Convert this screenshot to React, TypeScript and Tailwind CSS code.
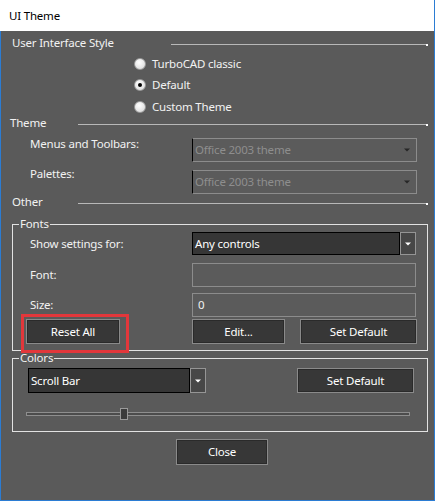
import type { ReactNode } from 'react';

const TEXT = "font-['Noto_Sans',sans-serif] text-[11.5px] tracking-[-0.2px] leading-[16px]";

function Rule({ label, width }: { label: string; width: string }) {
  return (
    <div className="flex items-center h-[16px]">
      <span className={`${width} shrink-0`}>{label}</span>
      <span className="relative flex-1 h-px mt-[3px] bg-[#b8b8b8]">
        <span className="absolute right-0 top-0 w-[2px] h-[2px] bg-white" />
      </span>
    </div>
  );
}

function Radio({ label, checked }: { label: string; checked?: boolean }) {
  return (
    <div className="flex items-center gap-[6px] ml-[122px]">
      <span className="w-[12px] h-[12px] rounded-full border border-[#9a9a9a] bg-[radial-gradient(circle_at_40%_35%,#ffffff,#d4d4d4)] flex items-center justify-center">
        {checked && <span className="w-[4px] h-[4px] rounded-full bg-black" />}
      </span>
      <span>{label}</span>
    </div>
  );
}

function Arrow({ color }: { color: string }) {
  return (
    <svg width="6" height="4" viewBox="0 0 6 4" className="shrink-0">
      <path d="M0 0.5h6L3 3.5z" fill={color} />
    </svg>
  );
}

function DisabledCombo({ value }: { value: string }) {
  return (
    <div className="w-[225px] h-[24px] flex items-center border border-[#8c8c8c] border-l-black bg-[#5b5b5b] pl-[2px] pr-[6px] text-[#8e8e8e]">
      <span className="flex-1">{value}</span>
      <Arrow color="#262626" />
    </div>
  );
}

function DarkCombo({ value, width }: { value: string; width: string }) {
  return (
    <div className={`${width} h-full flex`}>
      <div className="flex-1 flex items-center border border-black bg-[#363636] pl-[2px] text-white">{value}</div>
      <div className="w-[16px] flex items-center justify-center border border-[#959595] bg-[#474747]">
        <Arrow color="#ffffff" />
      </div>
    </div>
  );
}

function Button({ children, width }: { children: ReactNode; width: string }) {
  return (
    <button className={`${width} h-full border border-[#8a8a8a] bg-[#373737] shadow-[inset_0_0_0_1px_#2a2a2a] text-white`}>
      {children}
    </button>
  );
}

function Group({ title, children }: { title: string; children: ReactNode }) {
  return (
    <fieldset className="w-[416px] border border-[#e2e2e2]">
      <legend className="ml-[6px] px-[1px] leading-[16px]">{title}</legend>
      {children}
    </fieldset>
  );
}

export default function App() {
  return (
    <div className={`w-[435px] h-[501px] flex flex-col ${TEXT} text-[#f2f2f2]`}>
      <div className="h-[31px] shrink-0 bg-white border-r border-[#2b7cd3] flex items-center pl-[9px] text-black">
        UI Theme
      </div>

      <div className="flex-1 flex flex-col bg-[#5a5a5a] border-x border-b border-[#2b7cd3] pl-[11px] pr-[6px]">
        <div className="mt-[4px]">
          <Rule label="User Interface Style" width="w-[159px]" />
        </div>
        <div className="flex flex-col mt-[3px]">
          <div className="h-[20px] flex items-center"><Radio label="TurboCAD classic" /></div>
          <div className="h-[21px] flex items-center"><Radio label="Default" checked /></div>
          <div className="h-[23px] flex items-center"><Radio label="Custom Theme" /></div>
        </div>

        <div className="-ml-[2px] -mt-[3px]">
          <Rule label="Theme" width="w-[68px]" />
        </div>
        <div className="flex items-start mt-[7px] pl-[18px]">
          <span className="w-[162px] -mt-[2px]">Menus and Toolbars:</span>
          <DisabledCombo value="Office 2003 theme" />
        </div>
        <div className="flex items-start mt-[8px] pl-[18px]">
          <span className="w-[162px] -mt-[4px]">Palettes:</span>
          <DisabledCombo value="Office 2003 theme" />
        </div>

        <div>
          <Rule label="Other" width="w-[66px]" />
        </div>

        <div className="mt-[6px]">
          <Group title="Fonts">
            <div className="flex flex-col pl-[17px] pr-[10px] pb-[6px]">
              <div className="flex items-center h-[23px]">
                <span className="w-[162px]">Show settings for:</span>
                <DarkCombo value="Any controls" width="w-[224px]" />
              </div>
              <div className="flex items-center h-[24px] mt-[8px]">
                <span className="w-[162px]">Font:</span>
                <div className="w-[224px] h-full border border-[#8c8c8c] bg-[#5b5b5b]" />
              </div>
              <div className="flex items-center h-[24px] mt-[6px]">
                <span className="w-[162px]">Size:</span>
                <div className="w-[224px] h-full border border-[#8c8c8c] bg-[#5b5b5b] flex items-center pl-[5px]">0</div>
              </div>
              <div className="flex h-[25px] mt-[2px] -ml-[4px]">
                <div className="relative w-[94px] h-full">
                  <Button width="w-full">Reset All</Button>
                  <span className="absolute -left-[5px] -right-[9px] -top-[5px] -bottom-[9px] border-[3px] border-[#e2373b] z-10" />
                </div>
                <div className="ml-[72px] h-full"><Button width="w-[93px]">Edit...</Button></div>
                <div className="ml-[15px] h-full"><Button width="w-[117px]">Set Default</Button></div>
              </div>
            </div>
          </Group>
        </div>

        <div className="-mt-px">
          <Group title="Colors">
            <div className="flex flex-col pl-[15px] pt-[2px] pb-[10px]">
              <div className="flex h-[25px]">
                <DarkCombo value="Scroll Bar" width="w-[178px]" />
                <div className="ml-[91px] h-full"><Button width="w-[117px]">Set Default</Button></div>
              </div>
              <div className="relative flex items-center h-[14px] mt-[14px] -ml-[2px] w-[384px]">
                <div className="w-full h-[4px] border border-[#8e8e8e] bg-[#4c4c4c]" />
                <span className="absolute left-[94px] top-px w-[8px] h-[12px] border border-[#9a9a9a] bg-[#3c3c3c]" />
              </div>
            </div>
          </Group>
        </div>

        <div className="mt-[7px] ml-[164px] h-[26px]">
          <Button width="w-[92px]">Close</Button>
        </div>
      </div>
    </div>
  );
}
